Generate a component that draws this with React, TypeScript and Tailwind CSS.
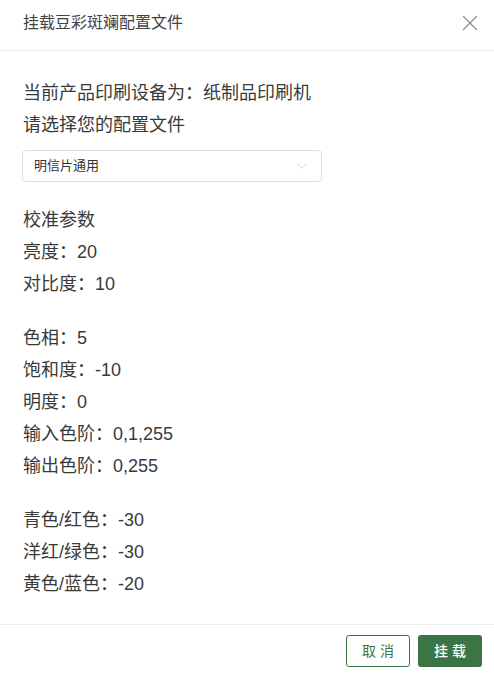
import { X, ChevronDown } from "lucide-react";

const FONT =
  "font-['Liberation_Sans','Noto_Sans_CJK_SC',sans-serif]";

const groups: string[][] = [
  ["校准参数", "亮度：20", "对比度：10"],
  ["色相：5", "饱和度：-10", "明度：0", "输入色阶：0,1,255", "输出色阶：0,255"],
  ["青色/红色：-30", "洋红/绿色：-30", "黄色/蓝色：-20"],
];

export default function App() {
  return (
    <div className={`${FONT} flex h-[674px] w-[494px] flex-col bg-white text-[#3a3a3a]`}>
      {/* 标题栏 */}
      <div className="flex h-[51px] shrink-0 items-center justify-between border-b border-[#ececec] pl-[23px] pr-[11px] pb-[4px]">
        <span className="text-[16px] leading-none text-[#444]">挂载豆彩斑斓配置文件</span>
        <X className="size-[26px] text-[#8a8a8a]" strokeWidth={1.1} />
      </div>

      {/* 内容 */}
      <div className="flex flex-1 flex-col px-[23px] pt-[26px]">
        <p className="text-[18px] leading-[32px]">当前产品印刷设备为：纸制品印刷机</p>
        <p className="text-[18px] leading-[32px]">请选择您的配置文件</p>

        <div className="mt-[9px] flex h-[32px] w-[300px] -ml-px items-center justify-between rounded-[4px] border border-[#dcdcdc] pl-[11px] pr-[10px]">
          <span className="text-[13px] text-[#333]">明信片通用</span>
          <ChevronDown className="size-[18px] text-[#c4c4c4]" strokeWidth={1} />
        </div>

        <div className="mt-[22px] flex flex-col gap-[22px]">
          {groups.map((g, i) => (
            <div key={i}>
              {g.map((line) => (
                <p key={line} className="text-[18px] leading-[32px]">
                  {line}
                </p>
              ))}
            </div>
          ))}
        </div>
      </div>

      {/* 底部按钮 */}
      <div className="flex shrink-0 justify-end gap-[8px] border-t border-[#ececec] px-[12px] pt-[10px] pb-[7px]">
        <button className="h-[32px] w-[64px] rounded-[3px] border border-[#3b7546] text-[14px] tracking-[4px] indent-[4px] text-[#3b7546]">
          取消
        </button>
        <button className="h-[32px] w-[64px] rounded-[3px] bg-[#3b7546] text-[14px] font-medium tracking-[4px] indent-[4px] text-white">
          挂载
        </button>
      </div>
    </div>
  );
}
